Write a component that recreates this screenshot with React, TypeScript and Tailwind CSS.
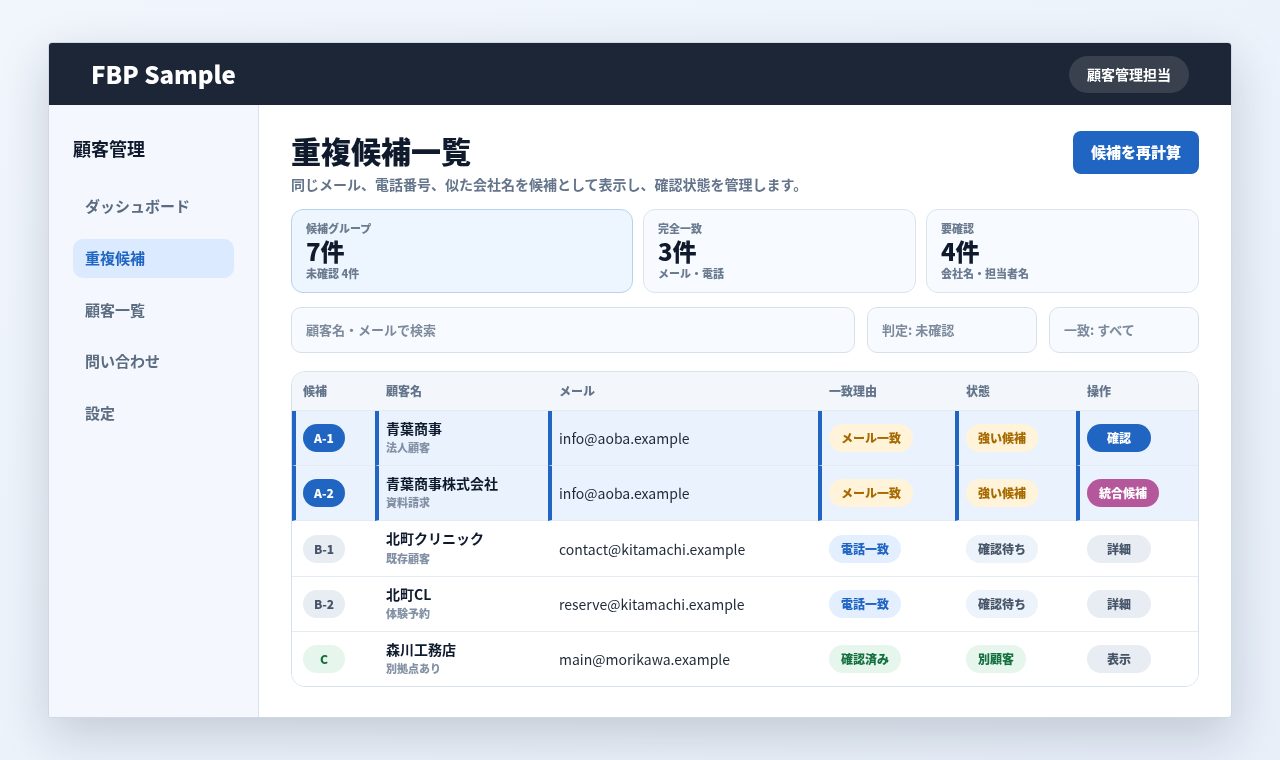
import React from 'react';

const navItems = ['ダッシュボード', '重複候補', '顧客一覧', '問い合わせ', '設定'];

const stats = [
  { label: '候補グループ', value: '7件', note: '未確認 4件', active: true },
  { label: '完全一致', value: '3件', note: 'メール・電話', active: false },
  { label: '要確認', value: '4件', note: '会社名・担当者名', active: false },
];

const pillStyles: Record<string, string> = {
  blue: 'bg-[#1f65c1] text-white',
  gray: 'bg-[#e8edf3] text-[#475569]',
  green: 'bg-[#e6f6ec] text-[#15703f]',
  amber: 'bg-[#fff3d9] text-[#a66a00]',
  sky: 'bg-[#e3efff] text-[#1f65c1]',
  slate: 'bg-[#edf3fa] text-[#475569]',
  plum: 'bg-[#b5589b] text-white',
};

const rows = [
  { id: 'A-1', idTone: 'blue', name: '青葉商事', sub: '法人顧客', mail: 'info@aoba.example', reason: 'メール一致', reasonTone: 'amber', state: '強い候補', stateTone: 'amber', action: '確認', actionTone: 'blue', hi: true, h: 'h-[55px]' },
  { id: 'A-2', idTone: 'blue', name: '青葉商事株式会社', sub: '資料請求', mail: 'info@aoba.example', reason: 'メール一致', reasonTone: 'amber', state: '強い候補', stateTone: 'amber', action: '統合候補', actionTone: 'plum', hi: true, h: 'h-[55px]' },
  { id: 'B-1', idTone: 'gray', name: '北町クリニック', sub: '既存顧客', mail: 'contact@kitamachi.example', reason: '電話一致', reasonTone: 'sky', state: '確認待ち', stateTone: 'slate', action: '詳細', actionTone: 'gray', hi: false, h: 'h-[56px]' },
  { id: 'B-2', idTone: 'gray', name: '北町CL', sub: '体験予約', mail: 'reserve@kitamachi.example', reason: '電話一致', reasonTone: 'sky', state: '確認待ち', stateTone: 'slate', action: '詳細', actionTone: 'gray', hi: false, h: 'h-[55px]' },
  { id: 'C', idTone: 'green', name: '森川工務店', sub: '別拠点あり', mail: 'main@morikawa.example', reason: '確認済み', reasonTone: 'green', state: '別顧客', stateTone: 'green', action: '表示', actionTone: 'gray', hi: false, h: 'h-[54px]' },
];

const Pill: React.FC<{ tone: string; className?: string; children: React.ReactNode }> = ({ tone, className, children }) => (
  <span className={`inline-flex h-7 items-center justify-center whitespace-nowrap rounded-full px-3 font-extrabold ${className || 'text-xs'} ${pillStyles[tone]}`}>
    {children}
  </span>
);

const Cell: React.FC<{ hi: boolean; last: boolean; children: React.ReactNode }> = ({ hi, last, children }) => (
  <td
    className={`pr-2 align-middle ${hi ? 'border-l-4 border-l-[#1f65c1] pl-[7px]' : 'pl-[11px]'} ${
      last ? '' : 'border-b border-b-[#e5ebf3]'
    }`}
  >
    {children}
  </td>
);

const App: React.FC = () => {
  return (
    <div
      className="flex h-[760px] w-[1280px] items-start justify-center overflow-hidden bg-gradient-to-br from-[#f1f6fd] to-[#e8eff9] pt-[42px] text-[#0f1b2d]"
      style={{ fontFamily: '"Noto Sans CJK JP", "Noto Sans", sans-serif' }}
    >
      <div className="flex h-[676px] w-[1184px] flex-col overflow-hidden rounded-[4px] border border-[#cfd9e6] bg-white shadow-[0_18px_50px_rgba(15,27,45,0.18)] will-change-transform">
        <header className="flex h-[62px] shrink-0 items-center justify-between bg-[#1c2636] px-[42px]">
          <div className="text-2xl font-extrabold leading-none text-white">FBP Sample</div>
          <div className="flex h-[37px] w-[120px] items-center justify-center rounded-full bg-[#39414f] text-sm font-bold text-white">
            顧客管理担当
          </div>
        </header>

        <div className="flex min-h-0 flex-1">
          <aside className="w-[210px] shrink-0 border-r border-[#d9e3ee] bg-[#f4f8fe] px-6 pt-[30px]">
            <div className="text-[18px] font-bold leading-[26px] text-[#0f1b2d]">顧客管理</div>
            <nav className="mt-[25.8px] flex flex-col gap-[12.75px]">
              {navItems.map((item) => (
                <div
                  key={item}
                  className={`flex h-[39px] w-[161px] items-center rounded-[10px] px-3 text-[15px] font-bold ${
                    item === '重複候補' ? 'bg-[#dbeafe] text-[#1f65c1]' : 'text-[#5b6b80]'
                  }`}
                >
                  {item}
                </div>
              ))}
            </nav>
          </aside>

          <main className="min-w-0 flex-1 px-8 pt-[26px]">
            <div className="flex items-start justify-between">
              <div>
                <h1 className="text-[30px] font-extrabold leading-[38px] text-[#0f1b2d]">重複候補一覧</h1>
                <p className="mt-0.5 text-sm font-bold leading-[26px] text-[#64748b]">
                  同じメール、電話番号、似た会社名を候補として表示し、確認状態を管理します。
                </p>
              </div>
              <button className="flex h-[43px] w-[126px] items-center justify-center rounded-lg bg-[#1f65c1] text-[15px] font-extrabold text-white">
                候補を再計算
              </button>
            </div>

            <div className="mt-3 grid grid-cols-[342px_273px_273px] gap-[10px]">
              {stats.map((s) => (
                <div
                  key={s.label}
                  className={`h-[84px] rounded-xl border px-[14px] pt-[10px] ${
                    s.active ? 'border-[#b5d2ee] bg-[#edf5fe]' : 'border-[#dbe4ee] bg-[#f7fafe]'
                  }`}
                >
                  <div className="text-[11px] font-extrabold leading-[16px] text-[#6b7b90]">{s.label}</div>
                  <div className="text-[24px] font-extrabold leading-[30px] text-[#0f1b2d]">{s.value}</div>
                  <div className="text-[11px] font-extrabold leading-[14px] text-[#6b7b90]">{s.note}</div>
                </div>
              ))}
            </div>

            <div className="mt-[14px] grid grid-cols-[564px_170px_150px] gap-3">
              {['顧客名・メールで検索', '判定: 未確認', '一致: すべて'].map((f) => (
                <div
                  key={f}
                  className="flex h-[46px] items-center rounded-[10px] border border-[#d7e1ec] bg-[#f7fafe] px-[14px] text-[13px] font-bold text-[#7c8a9c]"
                >
                  {f}
                </div>
              ))}
            </div>

            <div className="mt-[18px] overflow-hidden rounded-[14px] border border-[#d7e1ec]">
              <table className="w-[906px] table-fixed border-separate border-spacing-0">
                <colgroup>
                  <col className="w-[83px]" />
                  <col className="w-[173px]" />
                  <col className="w-[270px]" />
                  <col className="w-[137px]" />
                  <col className="w-[121px]" />
                  <col className="w-[122px]" />
                </colgroup>
                <thead>
                  <tr className="h-[39px] bg-[#f3f7fb]">
                    {['候補', '顧客名', 'メール', '一致理由', '状態', '操作'].map((h) => (
                      <th
                        key={h}
                        className="border-b border-[#e5ebf3] pl-[11px] text-left text-xs font-extrabold text-[#64748b]"
                      >
                        {h}
                      </th>
                    ))}
                  </tr>
                </thead>
                <tbody>
                  {rows.map((r, i) => {
                    const last = i === rows.length - 1;
                    return (
                      <tr key={r.id} className={`${r.h} ${r.hi ? 'bg-[#eaf2fe]' : 'bg-white'}`}>
                        <Cell hi={r.hi} last={last}>
                          <Pill tone={r.idTone} className="w-[42px] text-xs">{r.id}</Pill>
                        </Cell>
                        <Cell hi={r.hi} last={last}>
                          <div className="pb-0.5">
                            <div className="text-sm font-bold leading-[21.4px] text-[#0f1b2d]">{r.name}</div>
                            <div className="text-[11px] font-extrabold leading-[17px] text-[#8391a5]">{r.sub}</div>
                          </div>
                        </Cell>
                        <Cell hi={r.hi} last={last}>
                          <div className="text-sm text-[#1f2937]">{r.mail}</div>
                        </Cell>
                        <Cell hi={r.hi} last={last}>
                          <Pill tone={r.reasonTone}>{r.reason}</Pill>
                        </Cell>
                        <Cell hi={r.hi} last={last}>
                          <Pill tone={r.stateTone}>{r.state}</Pill>
                        </Cell>
                        <Cell hi={r.hi} last={last}>
                          <Pill tone={r.actionTone} className={r.action.length === 2 ? 'w-[64px] text-xs' : 'text-xs'}>{r.action}</Pill>
                        </Cell>
                      </tr>
                    );
                  })}
                </tbody>
              </table>
            </div>
          </main>
        </div>
      </div>
    </div>
  );
};

export default App;
